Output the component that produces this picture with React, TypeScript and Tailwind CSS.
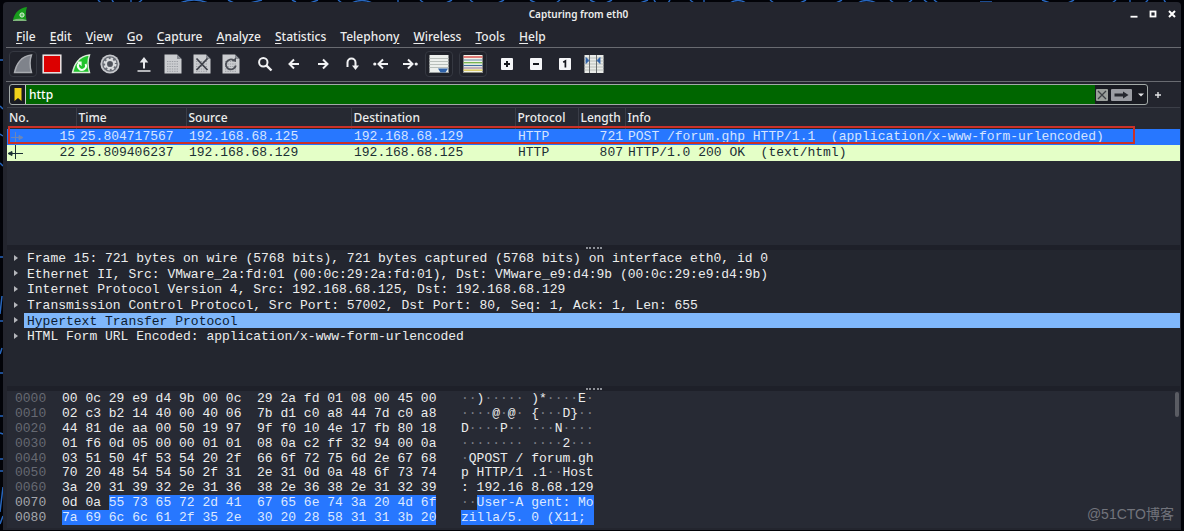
import type { ReactNode } from "react";

const MENU = ["_File", "_Edit", "_View", "_Go", "_Capture", "_Analyze", "_Statistics", "Telephon_y", "_Wireless", "_Tools", "_Help"];

const FIN = "M1.5 18.5C3 10.5 8 2 18.5 1C16.5 6.5 16.8 13 18.5 18.5Z";

function Icon({ children }: { children: ReactNode }) {
  return (
    <svg viewBox="0 0 20 20" className="h-5 w-5" aria-hidden="true">
      {children}
    </svg>
  );
}

const PAGE = (
  <>
    <path d="M1.5 .5H14L18.5 5V19.5H1.5Z" fill="#cbcdd0" />
    <path d="M14 .5V5H18.5Z" fill="#878a91" />
    <path d="M4 7.5H16M4 10H16M4 12.5H16M4 15H16M4 17.3H16" stroke="#9a9da3" strokeWidth="1" strokeDasharray="1.4 1" />
  </>
);

const LEFT = "M15 10H5.5M10 5.5L5.5 10L10 14.5";
const RIGHT = "M5 10H14.5M10 5.5L14.5 10L10 14.5";
const stroke = { stroke: "#f1f2f4", strokeWidth: 2, fill: "none" };

const ICONS: Record<string, ReactNode> = {
  start: <path d={FIN} fill="#7f838b" stroke="#a9acb1" strokeWidth="1.4" />,
  stop: <rect x="1.2" y="1.2" width="17.6" height="17.6" fill="#dc0000" stroke="#ece7e7" strokeWidth="1.5" />,
  restart: (
    <>
      <path d={FIN} fill="#1fc42c" stroke="#d9ecd8" strokeWidth="1.4" />
      <path d="M8 9.2A4 4 0 1 0 14.5 10" fill="none" stroke="#f2fff2" strokeWidth="2" />
      <path d="M5.6 7.5H10.6V12.3Z" fill="#f2fff2" />
    </>
  ),
  options: (
    <>
      <circle cx="10" cy="10" r="9.6" fill="#c6c8cc" />
      <circle cx="10" cy="10" r="7.8" fill="#686c75" />
      <circle cx="10" cy="10" r="5.2" fill="none" stroke="#dadcdf" strokeWidth="2.6" strokeDasharray="2.3 1.78" />
      <circle cx="10" cy="10" r="4" fill="none" stroke="#dadcdf" strokeWidth="1.8" />
      <circle cx="10" cy="10" r="2.4" fill="#4d515a" />
    </>
  ),
  open: (
    <>
      <path d="M10 14.5V6" stroke="#e6e7ea" strokeWidth="2" />
      <path d="M5.7 8.5L10 3L14.3 8.5Z" fill="#e6e7ea" />
      <path d="M3.5 17H16.5" stroke="#e6e7ea" strokeWidth="1.5" />
    </>
  ),
  save: PAGE,
  close: (
    <>
      {PAGE}
      <path d="M4.5 4.5L15.5 16M15.5 4.5L4.5 16" stroke="#3f424a" strokeWidth="1.8" />
    </>
  ),
  reload: (
    <>
      {PAGE}
      <path d="M14.8 11.5A5 5 0 1 1 13 6.5" stroke="#4b4e56" strokeWidth="1.8" fill="none" />
      <path d="M10.8 6.8L15 8V3.5Z" fill="#4b4e56" />
    </>
  ),
  find: (
    <>
      <circle cx="8.3" cy="8.3" r="4.2" {...stroke} />
      <path d="M11.3 11.3L16.5 16.5" {...stroke} strokeWidth="2.4" />
    </>
  ),
  back: <path d={LEFT} {...stroke} />,
  forward: <path d={RIGHT} {...stroke} />,
  goto: (
    <>
      <path d="M5.5 13V8.5A4 4 0 0 1 13.5 8.5V13" {...stroke} />
      <path d="M10 11.5H17L13.5 16Z" fill="#f1f2f4" />
    </>
  ),
  first: (
    <>
      <path d="M17 10H8M12 5.5L7.5 10L12 14.5" {...stroke} />
      <circle cx="3.8" cy="10" r="1.6" fill="#f1f2f4" />
    </>
  ),
  last: (
    <>
      <path d="M3 10H12M8 5.5L12.5 10L8 14.5" {...stroke} />
      <circle cx="16.2" cy="10" r="1.6" fill="#f1f2f4" />
    </>
  ),
  autoscroll: (
    <>
      <rect x=".5" y="1" width="19" height="18" fill="#ecefec" />
      <path d="M.5 4.5H19.5M.5 7.5H19.5M.5 10.5H19.5M.5 13.5H19.5" stroke="#b9bfbb" strokeWidth="1" />
      <path d="M.5 18.5H19.5" stroke="#9a9f9e" />
      <path d="M9 14.5H19L16.5 18.5H11.5Z" fill="#2f62a8" />
    </>
  ),
  colorize: (
    <>
      <rect x=".5" y="1" width="19" height="18" fill="#f3f4ea" />
      <path d="M.5 3H19.5" stroke="#d95550" strokeWidth="1.5" />
      <path d="M.5 6H19.5" stroke="#5f86a8" strokeWidth="1" />
      <path d="M.5 8.7H19.5" stroke="#6fb04a" strokeWidth="1.3" />
      <path d="M.5 11.5H19.5" stroke="#3f6f9f" strokeWidth="1.2" />
      <path d="M.5 14H19.5" stroke="#8a6a91" strokeWidth="1" />
      <path d="M.5 16.2H19.5" stroke="#dccb60" strokeWidth="1.5" />
      <path d="M.5 18.5H19.5" stroke="#8b8d80" />
    </>
  ),
  zoomIn: (
    <>
      <rect x="4" y="4" width="12" height="12" rx="1" fill="#f4f5f7" />
      <path d="M7 10H13M10 7V13" stroke="#15171d" strokeWidth="2" />
    </>
  ),
  zoomOut: (
    <>
      <rect x="4" y="4" width="12" height="12" rx="1" fill="#f4f5f7" />
      <path d="M7 10H13" stroke="#15171d" strokeWidth="2" />
    </>
  ),
  zoomReset: (
    <>
      <rect x="4" y="4" width="12" height="12" rx="1" fill="#f4f5f7" />
      <path d="M8.2 8.2L10.4 7V13.5" stroke="#15171d" strokeWidth="1.7" fill="none" />
    </>
  ),
  resize: (
    <>
      <rect x=".5" y="1" width="19" height="18" fill="#e9ebe8" />
      <path d="M.5 4H19.5M.5 7H19.5M.5 10H19.5M.5 13H19.5M.5 16H19.5" stroke="#b9beba" strokeWidth="1" />
      <path d="M5.500 1V19M12.500 1V19" stroke="#6b6f70" strokeWidth="1" />
      <path d="M2 3.500L5 6.500L2 9.500ZM16 3.500L13 6.500L16 9.500Z" fill="#2f62a8" stroke="#2f62a8" strokeWidth=".8" />
    </>
  ),
};

const GROUPS: [string, string][][] = [
  [["start", "Start capture"], ["stop", "Stop capture"], ["restart", "Restart capture"], ["options", "Capture options"]],
  [["open", "Open file"], ["save", "Save file"], ["close", "Close file"], ["reload", "Reload file"]],
  [["find", "Find packet"], ["back", "Previous packet"], ["forward", "Next packet"], ["goto", "Go to packet"], ["first", "First packet"], ["last", "Last packet"], ["autoscroll", "Auto scroll"]],
  [["colorize", "Colorize"]],
  [["zoomIn", "Zoom in"], ["zoomOut", "Zoom out"], ["zoomReset", "Normal size"], ["resize", "Resize columns"]],
];

const FRAMED = ["start", "autoscroll", "colorize"];

const PACKETS = [
  { no: "15", time: "25.804717567", src: "192.168.68.125", dst: "192.168.68.129", proto: "HTTP", len: "721", info: "POST /forum.ghp HTTP/1.1  (application/x-www-form-urlencoded)" },
  { no: "22", time: "25.809406237", src: "192.168.68.129", dst: "192.168.68.125", proto: "HTTP", len: "807", info: "HTTP/1.0 200 OK  (text/html)" },
];

const TREE = [
  "Frame 15: 721 bytes on wire (5768 bits), 721 bytes captured (5768 bits) on interface eth0, id 0",
  "Ethernet II, Src: VMware_2a:fd:01 (00:0c:29:2a:fd:01), Dst: VMware_e9:d4:9b (00:0c:29:e9:d4:9b)",
  "Internet Protocol Version 4, Src: 192.168.68.125, Dst: 192.168.68.129",
  "Transmission Control Protocol, Src Port: 57002, Dst Port: 80, Seq: 1, Ack: 1, Len: 655",
  "Hypertext Transfer Protocol",
  "HTML Form URL Encoded: application/x-www-form-urlencoded",
];
const TREE_SELECTED = 4;

// [offset, hex, ascii, first selected hex column, first selected ascii column]
const DUMP: [string, string, string, number, number][] = [
  ["0000", "00 0c 29 e9 d4 9b 00 0c  29 2a fd 01 08 00 45 00", "··)····· )*····E·", -1, -1],
  ["0010", "02 c3 b2 14 40 00 40 06  7b d1 c0 a8 44 7d c0 a8", "····@·@· {···D}··", -1, -1],
  ["0020", "44 81 de aa 00 50 19 97  9f f0 10 4e 17 fb 80 18", "D····P·· ···N····", -1, -1],
  ["0030", "01 f6 0d 05 00 00 01 01  08 0a c2 ff 32 94 00 0a", "········ ····2···", -1, -1],
  ["0040", "03 51 50 4f 53 54 20 2f  66 6f 72 75 6d 2e 67 68", "·QPOST / forum.gh", -1, -1],
  ["0050", "70 20 48 54 54 50 2f 31  2e 31 0d 0a 48 6f 73 74", "p HTTP/1 .1··Host", -1, -1],
  ["0060", "3a 20 31 39 32 2e 31 36  38 2e 36 38 2e 31 32 39", ": 192.16 8.68.129", -1, -1],
  ["0070", "0d 0a 55 73 65 72 2d 41  67 65 6e 74 3a 20 4d 6f", "··User-A gent: Mo", 6, 2],
  ["0080", "7a 69 6c 6c 61 2f 35 2e  30 20 28 58 31 31 3b 20", "zilla/5. 0 (X11; ", 0, 0],
];

function Dots({ text }: { text: string }) {
  return (
    <>
      {text.split(/(·+)/).map((part, i) =>
        part.startsWith("·") ? <span key={i} className="text-[#7b7e87]">{part}</span> : part,
      )}
    </>
  );
}

function Selectable({ text, from }: { text: string; from: number }) {
  const cut = from < 0 ? text.length : from;
  return (
    <div className="flex">
      <span><Dots text={text.slice(0, cut)} /></span>
      <span className="bg-[#2777ff] text-[#dce8ff]">{text.slice(cut)}</span>
    </div>
  );
}

function Splitter() {
  return (
    <div className="flex h-[5px] items-center justify-center bg-[#1e2029]">
      <span className="w-4 border-t-2 border-dotted border-[#8d9097]" />
    </div>
  );
}

function MenuLabel({ text }: { text: string }) {
  const at = text.indexOf("_");
  return (
    <>
      {text.slice(0, at)}
      <span className="underline underline-offset-2">{text[at + 1]}</span>
      {text.slice(at + 2)}
    </>
  );
}

function Wallpaper() {
  return (
    <svg className="absolute inset-0 h-full w-full" aria-hidden="true">
      <path
        d="M98 0L101 3M112 0L114 3M131 0V3M138 3L142 0M180 3Q194 -3 208 3M228 0L234 3M250 3L262 0M292 0L296 2M310 3L318 0M338 0L342 3M352 3Q362 -2 372 3M398 0V3M420 0L424 3M446 3L452 0M470 0L474 3M498 3L504 0M530 0L536 3M556 3L560 0M590 0L596 3M606 3L612 0M640 3L648 0M654 0L656 3M668 3L670 0M690 0L694 3M704 0V3M730 3Q738 -2 746 3M770 0L774 3M800 3L806 0M836 3L842 0M858 3Q866 -2 876 3M890 0L894 3M908 3L912 0M924 0L928 3M934 0L938 3M980 2H992M1042 0L1050 3M1068 3L1074 0M1112 3L1116 0M1130 0V3M1145 3L1148 0M1164 0L1166 3"
        stroke="#2766bd" strokeWidth="1.4" fill="none"
      />
      <path
        d="M0 60H3M0 106L3 109M0 134L3 136M0 163L3 166M0 257H3M2 296L0 314M0 321H3M2 348L0 354M0 373H3M0 416H3M0 433L3 434M0 459H3M0 471H3M3 487L0 512M0 524L3 516"
        stroke="#2766bd" strokeWidth="1.5" fill="none"
      />
    </svg>
  );
}

const TH = "border-l border-[#3a3d47] pl-[2px] text-left font-medium";

export default function App() {
  return (
    <div className="relative min-h-screen bg-[#020308] px-[3px] pt-[2px] font-['Noto_Sans','Open_Sans',sans-serif] text-[#eceded]">
      <Wallpaper />
      <main className="relative rounded-t bg-[#23252e] pb-[2px]">
        <header className="flex h-6 items-center pr-px pl-[10px]">
          <svg viewBox="0 0 14 14" className="h-[14px] w-[14px]" aria-hidden="true">
            <path d="M0 13C1.500 6 6 1 14 0C12.500 4 12.500 9 13.500 13Z" fill="#189c1c" />
            <path d="M0 13Q6 10.500 13.500 13V14H0Z" fill="#7fb77c" />
            <circle cx="9" cy="8" r="2.100" fill="#5fc364" stroke="#e0f4dd" />
          </svg>
          <h1 className="flex-1 pl-1 text-center text-[10px] font-semibold">Capturing from eth0</h1>
          <div className="flex gap-[3px]">
            <button aria-label="Minimize" className="flex h-4 w-4 items-center justify-center">
              <svg viewBox="0 0 8 8" className="h-2 w-2"><path d="M.5 6.700H7.500" stroke="#fff" strokeWidth="1.800" /></svg>
            </button>
            <button aria-label="Maximize" className="flex h-4 w-4 items-center justify-center">
              <svg viewBox="0 0 8 8" className="h-2 w-2"><rect x="1.500" y="1.500" width="5" height="5" fill="none" stroke="#fff" strokeWidth="1.800" /></svg>
            </button>
            <button aria-label="Close" className="flex h-4 w-4 items-center justify-center">
              <svg viewBox="0 0 8 8" className="h-2 w-2"><path d="M1 1L7 7M7 1L1 7" stroke="#fff" strokeWidth="2" /></svg>
            </button>
          </div>
        </header>

        <nav className="ml-[3px] flex h-[22px] items-center gap-[14px] border-b border-[#696b71] pl-[10px] text-xs font-medium">
          {MENU.map((m) => (
            <button key={m}><MenuLabel text={m} /></button>
          ))}
        </nav>

        <div className="ml-[3px] flex h-[34px] items-center gap-[6px] border-b border-[#696b71] pb-[2px] pl-[3px]">
          {GROUPS.map((group, g) => (
            <div key={g} className="flex gap-px">
              {group.map(([id, label]) => (
                <button
                  key={id}
                  aria-label={label}
                  className={
                    FRAMED.includes(id)
                      ? "flex h-[26px] w-7 items-center justify-center rounded-sm border border-[#353841] bg-[#20222a]"
                      : "flex h-[26px] w-7 items-center justify-center"
                  }
                >
                  <Icon>{ICONS[id]}</Icon>
                </button>
              ))}
            </div>
          ))}
        </div>

        <div className="flex items-center gap-1 py-[2px] pr-[17px] pl-[6px]">
          <div className="flex h-[21px] flex-1 items-center rounded-[3px] border border-[#a3aaa8] bg-[#191b22]">
            <button aria-label="Filter bookmarks" className="flex h-full w-4 items-center justify-center border-r border-[#c5cac6]">
              <svg viewBox="0 0 8 13" className="h-[13px] w-2"><path d="M.5 0H7.500V13L4 10L.5 13Z" fill="#f0d21a" /></svg>
            </button>
            <input
              aria-label="Display filter"
              defaultValue="http"
              className="h-full min-w-0 flex-1 bg-[#006600] pl-[3px] text-xs font-medium text-white outline-none"
            />
            <button aria-label="Clear filter" className="ml-px">
              <svg viewBox="0 0 12 12" className="h-3 w-3">
                <rect width="12" height="12" rx="1" fill="#9a9f9b" />
                <path d="M2 2L10 10M10 2L2 10" stroke="#3c4044" strokeWidth="1.300" />
              </svg>
            </button>
            <button aria-label="Apply filter" className="ml-[3px]">
              <svg viewBox="0 0 21 12" className="h-3 w-[21px]">
                <rect width="21" height="12" rx="1" fill="#9b9da3" />
                <path d="M3.500 6H13" stroke="#26282f" strokeWidth="3" />
                <path d="M12 2.500L17.500 6L12 9.500Z" fill="#26282f" />
              </svg>
            </button>
            <button aria-label="Recent filters" className="mr-[3px] ml-[6px]">
              <svg viewBox="0 0 6 4" className="h-1 w-[6px]"><path d="M0 .5H6L3 3.500Z" fill="#e3e4e6" /></svg>
            </button>
          </div>
          <button aria-label="Add filter button" className="flex h-4 w-3 items-center justify-center">
            <svg viewBox="0 0 6 6" className="h-[6px] w-[6px]"><path d="M0 3H6M3 0V6" stroke="#e3e4e6" strokeWidth="1.400" /></svg>
          </button>
        </div>

        <div className="pr-px pl-1">
          <section className="relative h-[138px] overflow-hidden bg-[#272a34]">
            <table className="w-full table-fixed border-collapse">
              <colgroup>
                <col className="w-[69px]" />
                <col className="w-[110px]" />
                <col className="w-[165px]" />
                <col className="w-[164px]" />
                <col className="w-[63px]" />
                <col className="w-[47px]" />
                <col />
              </colgroup>
              <thead>
                <tr className="h-[21px] border-t border-[#3c3f48] bg-[#262932] text-xs leading-4">
                  <th className="pl-[2px] text-left font-medium">No.</th>
                  <th className={TH}>Time</th>
                  <th className={TH}>Source</th>
                  <th className={TH}>Destination</th>
                  <th className={TH}>Protocol</th>
                  <th className={TH}>Length</th>
                  <th className={TH}>Info</th>
                </tr>
              </thead>
              <tbody className="font-['Liberation_Mono',monospace] text-[13px] leading-4 whitespace-pre">
                {PACKETS.map((p, i) => (
                  <tr key={p.no} className={i === 0 ? "bg-[#2777ff] text-[#d5e4ff]" : "bg-[#e4ffc7] text-[#1b2f34]"}>
                    <td>
                      <div className="flex h-4 items-center justify-between pr-px">
                        <svg viewBox="0 0 18 16" className="h-4 w-[18px]" aria-hidden="true">
                          {i === 0 ? (
                            <path d="M8.500 3V16M4 8.500H13M12 6.500L16 8.500L12 10.500Z" stroke="#6c86b8" fill="#6c86b8" />
                          ) : (
                            <path d="M8.500 0V14M16 8.500H5M5 6.500L1 8.500L5 10.500Z" stroke="#1b2f34" fill="#1b2f34" />
                          )}
                        </svg>
                        {p.no}
                      </div>
                    </td>
                    <td className="pl-1">{p.time}</td>
                    <td className="pl-[3px]">{p.src}</td>
                    <td className="pl-[3px]">{p.dst}</td>
                    <td className="pl-[3px]">{p.proto}</td>
                    <td className="pr-[2px] text-right">{p.len}</td>
                    <td className="pl-[3px]">{p.info}</td>
                  </tr>
                ))}
              </tbody>
            </table>
            <div className="pointer-events-none absolute top-[19px] right-[45px] left-px h-[18px] border-2 border-[#cb3128]" />
          </section>

          <Splitter />

          <section className="h-[136px] bg-[#23262f] font-['Liberation_Mono',monospace] text-[13px]">
            <ul className="grid h-[94px] auto-rows-[minmax(0,1fr)]">
              {TREE.map((line, i) => (
                <li key={line} className="flex items-stretch leading-[17px]">
                  <button aria-label="Expand" className="flex w-[17px] items-center justify-center">
                    <svg viewBox="0 0 4 6" className="h-[6px] w-1"><path d="M0 0L4 3L0 6Z" fill="#b4b6bb" /></svg>
                  </button>
                  <span className={i === TREE_SELECTED ? "flex-1 bg-[#7fb7fb] pl-[3px] text-[#0b1a30]" : "flex-1 pl-[3px]"}>{line}</span>
                </li>
              ))}
            </ul>
          </section>

          <Splitter />

          <section className="relative h-[137px] bg-[#272a34] font-['Liberation_Mono',monospace] text-[13px] leading-[15px] whitespace-pre">
            <div className="grid h-[134px] auto-rows-fr pl-2">
              {DUMP.map(([offset, hex, ascii, hexFrom, asciiFrom]) => (
                <div key={offset} className="flex">
                  <span className={hexFrom < 0 ? "w-[47px] text-[#666972]" : "w-[47px] text-[#a5a7ac]"}>{offset}</span>
                  <div className="w-[399px]"><Selectable text={hex} from={hexFrom} /></div>
                  <Selectable text={ascii} from={asciiFrom} />
                </div>
              ))}
            </div>
            <div className="absolute top-px right-px h-[25px] w-1 rounded-sm bg-[#5a5c63]" />
            <div className="absolute right-[6px] bottom-[5px] font-['Liberation_Sans','Noto_Sans_CJK_SC',sans-serif] text-sm leading-[18px] text-[#72747c]">
              @51CTO博客
            </div>
          </section>
        </div>
      </main>
    </div>
  );
}
